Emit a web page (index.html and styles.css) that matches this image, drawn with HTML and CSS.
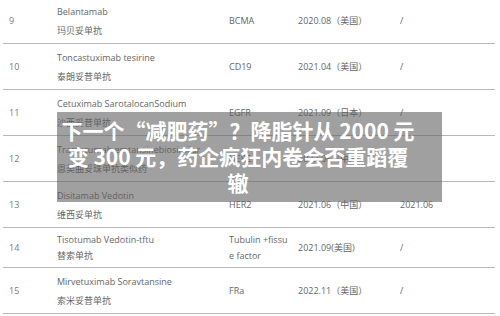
FILE: index.html
```html
<!DOCTYPE html>
<html lang="zh-CN">
<head>
<meta charset="utf-8">
<title>ADC 药物列表</title>
<link rel="stylesheet" href="styles.css">
</head>
<body>
<div class="page">
  <table class="drugs">
    <colgroup>
      <col class="c-num"><col class="c-name"><col class="c-target"><col class="c-date"><col class="c-cn">
    </colgroup>
    <tbody>
      <tr>
        <td class="num">9</td>
        <td><p>Belantamab</p><p>玛贝妥单抗</p></td>
        <td>BCMA</td>
        <td>2020.08（美国）</td>
        <td>/</td>
      </tr>
      <tr>
        <td class="num">10</td>
        <td><p>Toncastuximab tesirine</p><p>泰朗妥昔单抗</p></td>
        <td>CD19</td>
        <td>2021.04（美国）</td>
        <td>/</td>
      </tr>
      <tr>
        <td class="num">11</td>
        <td><p>Cetuximab SarotalocanSodium</p><p>沙西妥昔单抗</p></td>
        <td>EGFR</td>
        <td>2021.09（日本）</td>
        <td>/</td>
      </tr>
      <tr>
        <td class="num">12</td>
        <td><p>Trastuzumab emtansinebiosimilar</p><p>恩美曲妥珠单抗类似药</p></td>
        <td>HER2</td>
        <td>2023.06（中国）</td>
        <td></td>
      </tr>
      <tr>
        <td class="num">13</td>
        <td><p>Disitamab Vedotin</p><p>维西妥单抗</p></td>
        <td>HER2</td>
        <td>2021.06（中国）</td>
        <td>2021.06</td>
      </tr>
      <tr class="tight">
        <td class="num">14</td>
        <td><p>Tisotumab Vedotin-tftu</p><p>替索单抗</p></td>
        <td class="wrap">Tubulin +fissue factor</td>
        <td>2021.09(美国)</td>
        <td>/</td>
      </tr>
      <tr>
        <td class="num">15</td>
        <td><p>Mirvetuximab Soravtansine</p><p>索米妥昔单抗</p></td>
        <td>FRa</td>
        <td>2022.11（美国）</td>
        <td>/</td>
      </tr>
    </tbody>
  </table>
  <div class="headline">下一个“减肥药”？降脂针从 2000 元变 300 元，药企疯狂内卷会否重蹈覆辙</div>
</div>
</body>
</html>
```
FILE: styles.css
```css
* { box-sizing: border-box; }

html, body {
  margin: 0;
  padding: 0;
  background: #ffffff;
  overflow: hidden;
}

.page {
  position: relative;
  margin: -2px 0 0 3px;
  width: 492px;
}

.drugs {
  width: 492px;
  border-collapse: collapse;
  table-layout: fixed;
  font-family: "Open Sans", "Noto Sans CJK SC", sans-serif;
  font-size: 9px;
  color: #666666;
}

.c-num { width: 48px; }
.c-name { width: 172px; }
.c-target { width: 69px; }
.c-date { width: 102px; }
.c-cn { width: 101px; }

.drugs td {
  padding: 4px 6px 3px;
  border-bottom: 1px solid #b9b9b9;
  vertical-align: middle;
  line-height: 16px;
  white-space: nowrap;
}

.drugs td.num { color: #7a7a7a; }

.drugs td p {
  margin: 0;
  line-height: 19px;
}

.drugs tr.tight td p { line-height: 16px; }

.drugs td.wrap {
  padding-right: 2px;
  white-space: normal;
  word-break: break-all;
}

.headline {
  position: absolute;
  left: 54px;
  top: 114px;
  width: 385px;
  height: 90px;
  padding: 5px 27px 7px 4px;
  background: rgba(96, 96, 96, 0.6);
  color: #ffffff;
  font-family: "Noto Sans CJK SC", "Noto Sans", sans-serif;
  font-weight: 700;
  font-size: 21px;
  line-height: 26px;
  text-align: center;
}
```
